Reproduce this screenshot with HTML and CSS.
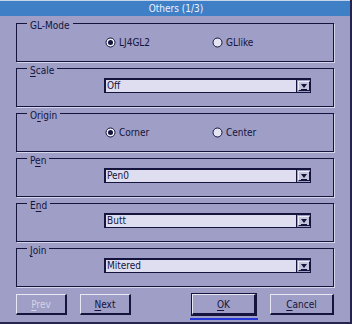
FILE: index.html
```html
<!DOCTYPE html>
<html lang="en">
<head>
    <meta charset="UTF-8">
    <title>Others (1/3)</title>
    <link rel="stylesheet" href="styles.css">
</head>
<body>
    <div class="window">
        <div class="titlebar">Others (1/3)</div>

        <div class="content">
            <fieldset class="group">
                <legend>GL-Mode</legend>
                <div class="row radio-row">
                    <label class="radio">
                        <svg width="11" height="11" viewBox="0 0 11 11"><circle cx="5.5" cy="5.5" r="4.5" fill="#f0f0f8" stroke="#14143c"/><circle cx="5.5" cy="5.5" r="2.5" fill="#14143c"/></svg>
                        LJ4GL2
                    </label>
                    <label class="radio">
                        <svg width="11" height="11" viewBox="0 0 11 11"><circle cx="5.5" cy="5.5" r="4.5" fill="#e4e4f2" stroke="#14143c"/></svg>
                        GLlike
                    </label>
                </div>
            </fieldset>

            <fieldset class="group">
                <legend><u>S</u>cale</legend>
                <div class="row select-row">
                    <div class="select">
                        <div class="value">Off</div>
                        <div class="arrow"><svg width="10" height="9" viewBox="0 0 10 9"><polygon points="2,2 8,2 5,6" fill="#14143c"/><rect x="2" y="7" width="6" height="1" fill="#14143c"/></svg></div>
                    </div>
                </div>
            </fieldset>

            <fieldset class="group">
                <legend>O<u>r</u>igin</legend>
                <div class="row radio-row">
                    <label class="radio">
                        <svg width="11" height="11" viewBox="0 0 11 11"><circle cx="5.5" cy="5.5" r="4.5" fill="#f0f0f8" stroke="#14143c"/><circle cx="5.5" cy="5.5" r="2.5" fill="#14143c"/></svg>
                        Corner
                    </label>
                    <label class="radio">
                        <svg width="11" height="11" viewBox="0 0 11 11"><circle cx="5.5" cy="5.5" r="4.5" fill="#e4e4f2" stroke="#14143c"/></svg>
                        Center
                    </label>
                </div>
            </fieldset>

            <fieldset class="group">
                <legend>P<u>e</u>n</legend>
                <div class="row select-row">
                    <div class="select">
                        <div class="value">Pen0</div>
                        <div class="arrow"><svg width="10" height="9" viewBox="0 0 10 9"><polygon points="2,2 8,2 5,6" fill="#14143c"/><rect x="2" y="7" width="6" height="1" fill="#14143c"/></svg></div>
                    </div>
                </div>
            </fieldset>

            <fieldset class="group">
                <legend>E<u>n</u>d</legend>
                <div class="row select-row">
                    <div class="select">
                        <div class="value">Butt</div>
                        <div class="arrow"><svg width="10" height="9" viewBox="0 0 10 9"><polygon points="2,2 8,2 5,6" fill="#14143c"/><rect x="2" y="7" width="6" height="1" fill="#14143c"/></svg></div>
                    </div>
                </div>
            </fieldset>

            <fieldset class="group">
                <legend><u>J</u>oin</legend>
                <div class="row select-row">
                    <div class="select">
                        <div class="value">Mitered</div>
                        <div class="arrow"><svg width="10" height="9" viewBox="0 0 10 9"><polygon points="2,2 8,2 5,6" fill="#14143c"/><rect x="2" y="7" width="6" height="1" fill="#14143c"/></svg></div>
                    </div>
                </div>
            </fieldset>
        </div>

        <div class="buttons">
            <button class="btn small disabled"><u>P</u>rev</button>
            <button class="btn small"><u>N</u>ext</button>
            <span class="spacer"></span>
            <span class="focus"><button class="btn wide default"><u>O</u>K</button></span>
            <button class="btn wide"><u>C</u>ancel</button>
        </div>
    </div>
</body>
</html>
```

FILE: styles.css
```css
body {
    margin: 0;
    font-family: "DejaVu Sans Condensed", "DejaVu Sans", sans-serif;
    font-stretch: condensed;
    font-size: 10px;
    color: #14143c;
}
.window {
    width: 352px;
    height: 324px;
    box-sizing: border-box;
    background-color: #9e9ec6;
    border-right: 2px solid #24244c;
    border-bottom: 2px solid #24244c;
}
.titlebar {
    height: 15px;
    line-height: 15px;
    border-top: 1px solid #c4d4ec;
    background-color: #3f7fc6;
    color: #eef2ff;
    text-align: center;
    padding-left: 2px;
}
.content {
    padding: 2px 16px 0 16px;
}
.group {
    margin: 0 0 1px 0;
    padding: 0;
    width: 318px;
    box-sizing: border-box;
    border: 1px solid #14143c;
    box-shadow: 1px 1px 0 #d4d4ea;
}
.group legend {
    margin-left: 10px;
    padding: 3px 3px 0 3px;
    height: 11px;
    box-sizing: border-box;
    line-height: 10px;
}
u {
    text-underline-offset: 2px;
}
.row {
    height: 32px;
    box-sizing: border-box;
    display: flex;
    align-items: center;
    padding-left: 87px;
}
.radio-row {
    padding-bottom: 6px;
}
.select-row {
    padding-bottom: 9px;
}
.radio {
    width: 107px;
    display: flex;
    align-items: center;
    gap: 3px;
}
.radio svg {
    margin-left: 1px;
}
.select {
    width: 207px;
    height: 15px;
    box-sizing: border-box;
    display: flex;
    border: 1px solid #14143c;
    border-top-width: 2px;
    border-left-width: 2px;
}
.select .value {
    flex: 1;
    background-color: #dedef0;
    border-right: 1px solid #14143c;
    line-height: 12px;
    padding-left: 1px;
}
.select .arrow {
    width: 12px;
    box-sizing: border-box;
    margin: 1px 0 1px 1px;
    background-color: #c4c4dc;
    border-top: 1px solid #eeeef8;
    border-left: 1px solid #eeeef8;
    border-right: 1px solid #14143c;
    border-bottom: 1px solid #14143c;
    display: flex;
    align-items: center;
    justify-content: center;
}
.buttons {
    display: flex;
    align-items: flex-start;
    padding: 6px 16px 0 16px;
}
.spacer {
    flex: 1;
}
.btn {
    height: 21px;
    box-sizing: border-box;
    padding: 0;
    font: inherit;
    color: #14143c;
    background-color: #9e9ec6;
    border-top: 1px solid #e8e8f4;
    border-left: 1px solid #e8e8f4;
    border-right: 2px solid #14143c;
    border-bottom: 2px solid #14143c;
}
.small {
    width: 51px;
    margin-right: 13px;
}
.small + .small {
    margin-right: 0;
}
.wide {
    width: 64px;
}
.disabled {
    color: #d4d4e8;
}
.default {
    box-shadow: 0 0 0 1px #14143c;
}
.focus {
    display: block;
    padding: 0 2px 3px 2px;
    border-bottom: 2px solid #2436d8;
    margin-right: 12px;
}
.focus .btn {
    display: block;
}
```
